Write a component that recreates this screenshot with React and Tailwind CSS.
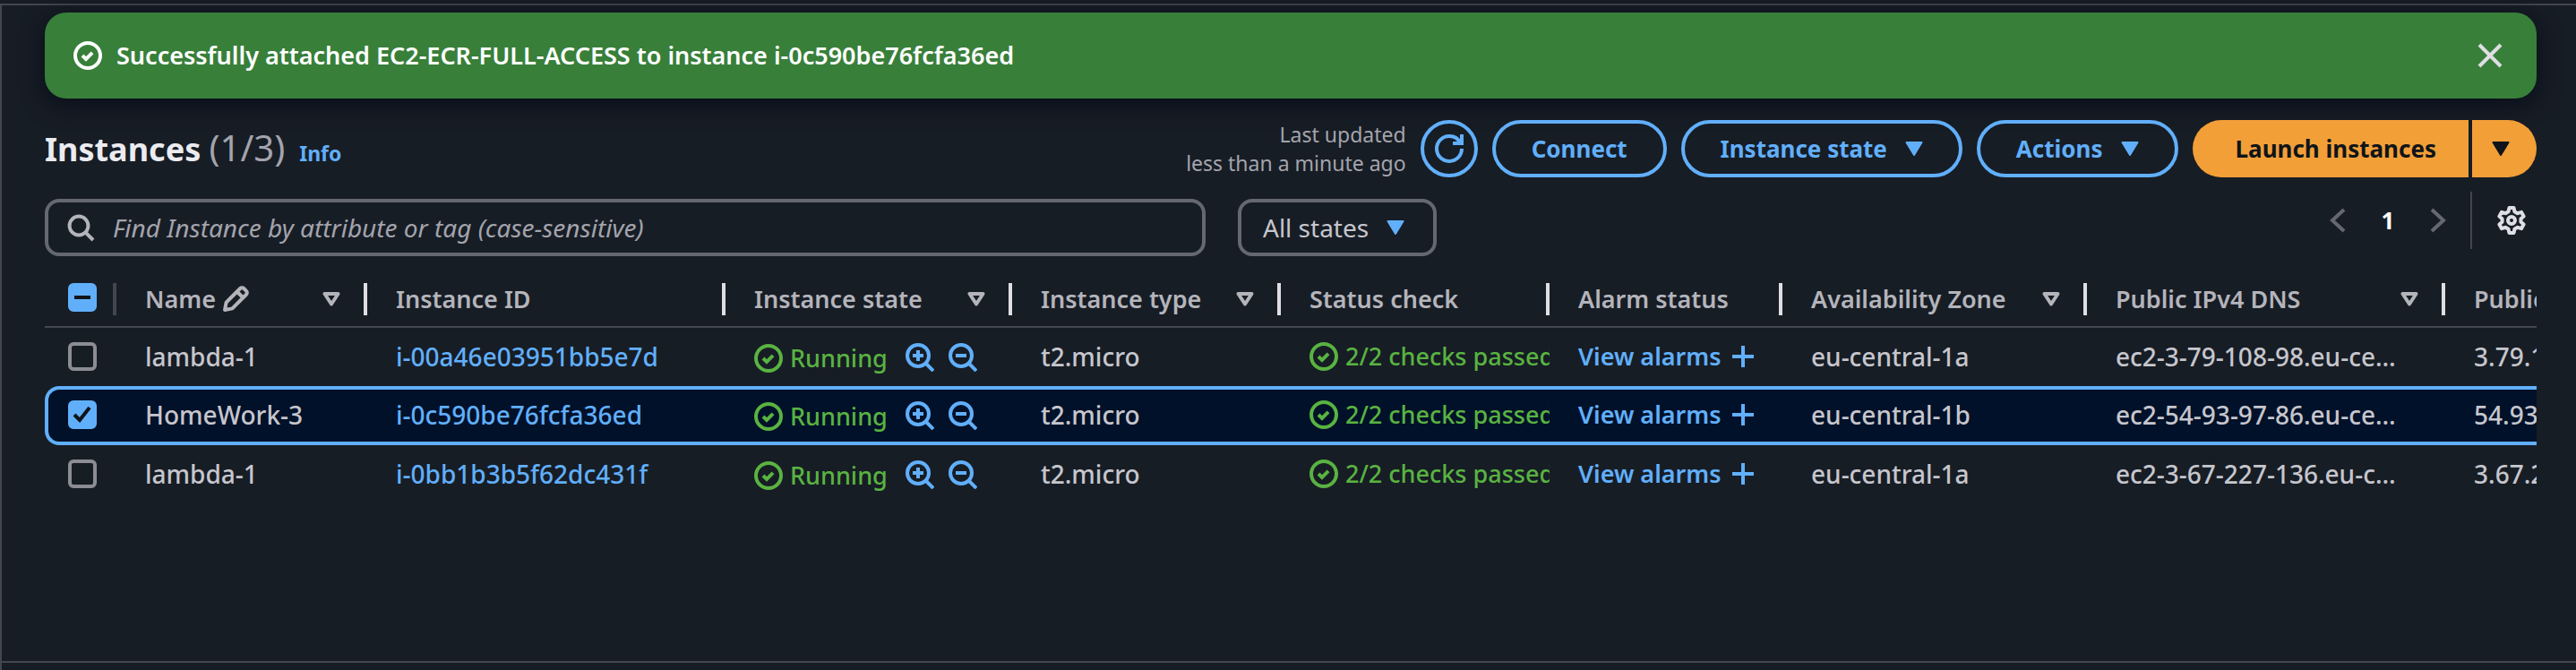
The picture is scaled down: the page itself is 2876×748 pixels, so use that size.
const svgBase = "block shrink-0 fill-none stroke-current";

function Icon({ children, className = "size-8", width = 2 }) {
  return (
    <svg viewBox="0 0 16 16" aria-hidden="true" strokeWidth={width} className={svgBase + " " + className}>
      {children}
    </svg>
  );
}

function StatusOk({ className }) {
  return (
    <Icon className={className}>
      <circle cx="8" cy="8" r="7" />
      <path d="m5 8 2 2 3.521-3.521" />
    </Icon>
  );
}

function CaretDown() {
  return (
    <svg viewBox="0 0 20 16" aria-hidden="true" strokeWidth="2" strokeLinejoin="round" className="h-4 w-5 shrink-0 fill-current stroke-current">
      <path d="M1.5 1h17L10 15z" />
    </svg>
  );
}

function SortMark() {
  return (
    <svg viewBox="0 0 20 16" aria-hidden="true" strokeWidth="4" strokeLinejoin="round" className="h-4 w-5 shrink-0 fill-none stroke-current">
      <path d="M2.5 2h15L10 13.5z" />
    </svg>
  );
}

function ZoomIcon({ plus }) {
  return (
    <Icon>
      <circle cx="7" cy="7" r="6" />
      <path d={plus ? "m11.5 11.5 4 4M4 7h6M7 4v6" : "m11.5 11.5 4 4M4 7h6"} />
    </Icon>
  );
}

function PencilIcon() {
  return (
    <Icon>
      <path strokeLinejoin="round" d="m9 4 3 3M2 14l.8-4.2L10.6 2a1.4 1.4 0 0 1 2 0L14 3.4a1.4 1.4 0 0 1 0 2L6.2 13.2z" />
    </Icon>
  );
}

const outlineButton =
  "flex h-16 items-center rounded-full border-4 border-[#61affb] text-[26px] font-bold text-[#61affb]";

const columns = [
  { label: "Name", width: "w-[280px]", sort: true, edit: true },
  { label: "Instance ID", width: "w-[400px]" },
  { label: "Instance state", width: "w-[320px]", sort: true },
  { label: "Instance type", width: "w-[300px]", sort: true },
  { label: "Status check", width: "w-[300px]" },
  { label: "Alarm status", width: "w-[260px]" },
  { label: "Availability Zone", width: "w-[340px]", sort: true },
  { label: "Public IPv4 DNS", width: "w-[400px]", sort: true },
  { label: "Public IPv4 address", width: "w-[400px]" },
];

const instances = [
  { name: "lambda-1", id: "i-00a46e03951bb5e7d", zone: "eu-central-1a", dns: "ec2-3-79-108-98.eu-ce…", ip: "3.79.108.98" },
  { name: "HomeWork-3", id: "i-0c590be76fcfa36ed", zone: "eu-central-1b", dns: "ec2-54-93-97-86.eu-ce…", ip: "54.93.97.86", selected: true },
  { name: "lambda-1", id: "i-0bb1b3b5f62dc431f", zone: "eu-central-1a", dns: "ec2-3-67-227-136.eu-c…", ip: "3.67.227.136" },
];

function Checkbox({ label, checked, mixed }) {
  return (
    <label className="grid size-8">
      <input
        type="checkbox"
        aria-label={label}
        defaultChecked={checked}
        ref={(el) => {
          if (el) el.indeterminate = Boolean(mixed);
        }}
        className="col-start-1 row-start-1 size-8 appearance-none rounded-md border-4 border-[#8c8c94] checked:border-[#61affb] checked:bg-[#61affb] indeterminate:border-[#61affb] indeterminate:bg-[#61affb]"
      />
      {(checked || mixed) && (
        <Icon className="pointer-events-none col-start-1 row-start-1 size-8 text-[#0f141a]">
          <path d={mixed ? "M3.5 8h9" : "m3.5 8 3 3 5.5-7"} />
        </Icon>
      )}
    </label>
  );
}

function Row({ item }) {
  const cell = item.selected
    ? "h-[66px] overflow-hidden whitespace-nowrap border-y-4 border-[#61affb] bg-[#001129] pt-3 pl-8 align-top"
    : "h-[65px] overflow-hidden whitespace-nowrap pt-4 pl-8 align-top";
  const first = item.selected
    ? "h-[66px] rounded-l-2xl border-y-4 border-l-4 border-[#61affb] bg-[#001129] pt-3 pl-[22px] align-top"
    : "h-[65px] pt-4 pl-[26px] align-top";
  return (
    <tr>
      <td className={first}>
        <Checkbox label={"Select " + item.id} checked={item.selected} />
      </td>
      <td className={cell}>{item.name}</td>
      <td className={cell}>
        <a href="#instance" className="text-[#61affb]">{item.id}</a>
      </td>
      <td className={cell}>
        <div className="flex items-center">
          <span className="flex items-center gap-2 pt-0.5 text-[27px] text-[#59b341]">
            <StatusOk />
            Running
          </span>
          <span className="ml-5 flex gap-4 text-[#61affb]">
            <button type="button" aria-label="Filter in"><ZoomIcon plus /></button>
            <button type="button" aria-label="Filter out"><ZoomIcon /></button>
          </span>
        </div>
      </td>
      <td className={cell}>t2.micro</td>
      <td className={cell}>
        <div className="flex items-center gap-2 overflow-hidden text-[27px] text-[#59b341]">
          <StatusOk />
          2/2 checks passed
        </div>
      </td>
      <td className={cell}>
        <div className="flex items-center gap-2 text-[27px] font-semibold text-[#61affb]">
          <a href="#alarms">View alarms</a>
          <button type="button" aria-label="Create alarm">
            <Icon><path d="M8 2v12M2 8h12" /></Icon>
          </button>
        </div>
      </td>
      <td className={cell}>{item.zone}</td>
      <td className={cell}>{item.dns}</td>
      <td className={cell}>{item.ip}</td>
    </tr>
  );
}

export default function App() {
  return (
    <div className="min-h-screen bg-[#171d25] pt-1 font-['Noto_Sans','Liberation_Sans',sans-serif] text-[28px] leading-8 text-[#c6c6cd]">
      <div className="flex min-h-[744px] flex-col border-t-2 border-l-2 border-[#424650]">
        <main className="flex flex-1 flex-col pt-2 pr-11 pl-12">
          <div role="status" className="flex h-24 items-center gap-4 rounded-3xl bg-[#387f3a] px-8 text-[27px] font-semibold text-white shadow-[0_6px_24px_2px_#0a0f1a]">
            <StatusOk />
            <span className="flex-1">Successfully attached EC2-ECR-FULL-ACCESS to instance i-0c590be76fcfa36ed</span>
            <button type="button" aria-label="Dismiss" className="mr-1 text-[#dedee3]">
              <Icon><path d="m2 2 12 12M14 2 2 14" /></Icon>
            </button>
          </div>

          <div className="mt-6 flex items-center gap-4">
            <div className="flex flex-1 items-baseline gap-4">
              <h1 className="text-4xl leading-10 font-bold text-[#ebebf0]">
                Instances <span className="text-[40px] font-normal text-[#a4a4ad]">(1/3)</span>
              </h1>
              <a href="#info" className="text-[23px] font-bold text-[#61affb]">Info</a>
            </div>
            <p className="text-right text-[23px] leading-8 text-[#a4a4ad]">
              Last updated
              <br />
              less than a minute ago
            </p>
            <button type="button" aria-label="Refresh" className={outlineButton + " w-16 justify-center"}>
              <Icon>
                <path d="M10 5h5V0" />
                <path d="M15 8a6.957 6.957 0 0 1-7 7 6.957 6.957 0 0 1-7-7 6.957 6.957 0 0 1 7-7 6.87 6.87 0 0 1 6.3 4" />
              </Icon>
            </button>
            <button type="button" className={outlineButton + " px-10"}>Connect</button>
            <button type="button" className={outlineButton + " gap-5 px-10"}>
              Instance state <CaretDown />
            </button>
            <button type="button" className={outlineButton + " gap-5 px-10"}>
              Actions <CaretDown />
            </button>
            <div className="flex gap-1 text-[26px] font-bold text-[#0f141a]">
              <button type="button" className="h-16 rounded-l-full bg-[#f29f38] pr-9 pl-12">Launch instances</button>
              <button type="button" aria-label="More launch options" className="flex h-16 w-[72px] items-center justify-center rounded-r-full bg-[#f29f38] pr-2">
                <CaretDown />
              </button>
            </div>
          </div>

          <div className="mt-6 flex items-start">
            <div className="flex h-16 w-[1296px] items-center gap-5 rounded-2xl border-4 border-[#656871] px-5 text-[#b4b4bb]">
              <Icon>
                <circle cx="7" cy="7" r="5.2" />
                <path d="m10.8 10.8 4.2 4.2" />
              </Icon>
              <input
                type="search"
                aria-label="Find Instance"
                placeholder="Find Instance by attribute or tag (case-sensitive)"
                className="h-10 min-w-0 flex-1 bg-transparent outline-none placeholder:text-[#a4a4ad] placeholder:italic"
              />
            </div>
            <button type="button" aria-haspopup="listbox" className="ml-9 flex h-16 items-center gap-5 rounded-2xl border-4 border-[#656871] pr-8 pl-6">
              All states <span className="text-[#61affb]"><CaretDown /></span>
            </button>
            <nav aria-label="Pages" className="-mt-2 ml-auto flex h-16 items-center">
              <button type="button" aria-label="Previous page" className="text-[#656871]">
                <Icon><path d="M11.5 2 5 8l6.5 6" /></Icon>
              </button>
              <button type="button" className="w-20 text-center text-[26px] font-bold text-white">1</button>
              <button type="button" aria-label="Next page" className="text-[#656871]">
                <Icon><path d="M4.5 2 11 8l-6.5 6" /></Icon>
              </button>
              <span className="ml-5 h-16 w-0.5 bg-[#424650]" />
              <button type="button" aria-label="Preferences" className="mr-3 ml-7 text-[#dedee3]">
                <Icon>
                  <circle cx="8" cy="8" r="2" />
                  <path strokeLinejoin="round" d="M6.7 1h2.6l.4 2.1 1.7 1 2.1-.7 1.3 2.3L13.2 7.1v1.8l1.6 1.4-1.3 2.3-2.1-.7-1.7 1L9.3 15H6.7l-.4-2.1-1.7-1-2.1.7-1.3-2.3 1.6-1.4V7.1L1.2 5.7l1.3-2.3 2.1.7 1.7-1z" />
                </Icon>
              </button>
            </nav>
          </div>

          <div className="mt-4 overflow-hidden">
            <table className="w-[3080px] table-fixed border-separate border-spacing-0 text-left font-medium">
              <thead>
                <tr>
                  <th scope="col" className="w-20 border-b-2 border-[#424650] p-0 pt-3.5 pb-3">
                    <div className="flex h-9 items-start border-r-4 border-[#424650] pl-[26px]">
                      <Checkbox label="Select all instances" mixed />
                    </div>
                  </th>
                  {columns.map((col) => (
                    <th key={col.label} scope="col" className={"border-b-2 border-[#424650] p-0 pt-3.5 pb-3 text-[27px] leading-9 font-semibold text-[#b4b4bb] " + col.width}>
                      <div className="flex h-9 items-center justify-between border-r-4 border-[#dedee3] pr-[26px] pl-8 whitespace-nowrap">
                        <span className="flex items-center gap-1.5">
                          {col.label}
                          {col.edit && <PencilIcon />}
                        </span>
                        {col.sort && (
                          <button type="button" aria-label={"Sort by " + col.label}>
                            <SortMark />
                          </button>
                        )}
                      </div>
                    </th>
                  ))}
                </tr>
              </thead>
              <tbody>
                {instances.map((item) => (
                  <Row key={item.id} item={item} />
                ))}
              </tbody>
            </table>
          </div>
        </main>
        <footer className="h-2.5 border-t-2 border-[#424650]" />
      </div>
    </div>
  );
}
